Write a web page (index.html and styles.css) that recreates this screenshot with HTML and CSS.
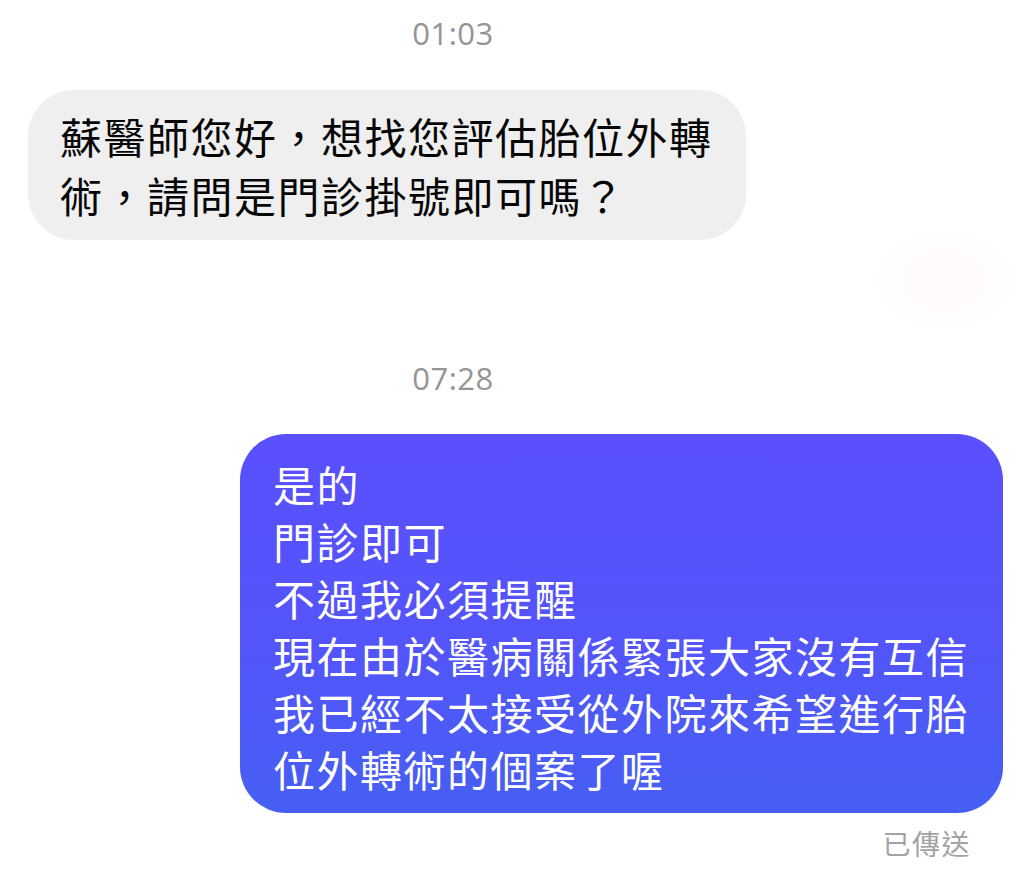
FILE: index.html
```
<html>

<head>
    <link rel="stylesheet" href="styles.css">
</head>

<body>
<div class="chat">
    <div class="stamp stamp-first">01:03</div>
    <div class="row row-in">
        <div class="bubble bubble-in">蘇醫師您好，想找您評估胎位外轉術，請問是門診掛號即可嗎？</div>
    </div>
    <div class="smudge"></div>
    <div class="stamp stamp-second">07:28</div>
    <div class="row row-out">
        <div class="bubble bubble-out">是的<br>門診即可<br>不過我必須提醒<br>現在由於醫病關係緊張大家沒有互信<br>我已經不太接受從外院來希望進行胎位外轉術的個案了喔</div>
    </div>
    <div class="status">已傳送</div>
</div>
</body>

</html>
```

FILE: styles.css
```
body {
    margin: 0;
    background: #fff;
    font-family: "Noto Sans CJK TC", "Noto Sans", sans-serif;
}

.chat {
    position: relative;
    display: flex;
    flex-direction: column;
    width: 1024px;
    height: 883px;
    overflow: hidden;
}

.stamp {
    width: 906px;
    text-align: center;
    font-family: "Open Sans", "Liberation Sans", sans-serif;
    font-size: 31px;
    line-height: 36px;
    letter-spacing: 0.5px;
    color: #959595;
}

.stamp-first {
    margin-top: 15px;
}

.stamp-second {
    margin-top: 120px;
}

.row {
    display: flex;
}

.row-in {
    margin-top: 39px;
    padding-left: 28px;
}

.row-out {
    justify-content: flex-end;
    margin-top: 38px;
    padding-right: 21px;
}

.bubble {
    box-sizing: border-box;
    font-size: 42px;
    letter-spacing: 1.5px;
}

.bubble-in {
    width: 718px;
    padding: 16px 28px 16px 32px;
    line-height: 59px;
    border-radius: 46px;
    background: #efefef;
    color: #060606;
}

.bubble-out {
    width: 763px;
    padding: 21px 30px 16px 33px;
    line-height: 57px;
    border-radius: 46px;
    background: linear-gradient(180deg, #5a4ffd 0%, #5355fa 55%, #465ff3 100%);
    color: #fff;
}

.status {
    align-self: flex-end;
    margin-top: 12px;
    margin-right: 53px;
    font-size: 28px;
    line-height: 36px;
    letter-spacing: 1.5px;
    color: #a3a3a3;
}

.smudge {
    position: absolute;
    left: 870px;
    top: 225px;
    width: 150px;
    height: 110px;
    border-radius: 50%;
    background: radial-gradient(closest-side, rgba(255, 240, 242, 0.5), rgba(255, 245, 246, 0));
}
```
